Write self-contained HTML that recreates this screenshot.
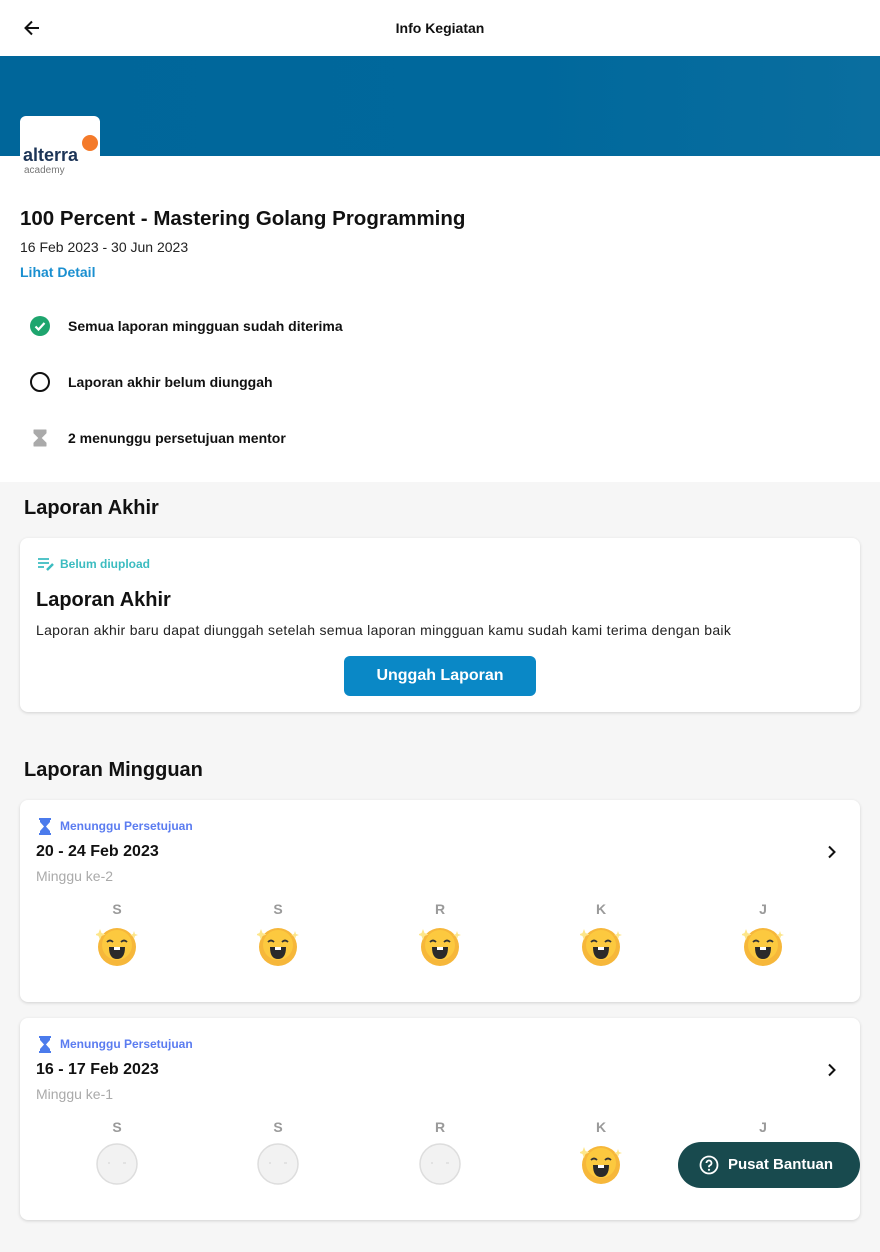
<!DOCTYPE html>
<html><head><meta charset="utf-8"><style>
*{box-sizing:border-box;margin:0;padding:0}
body{width:880px;height:1252px;background:#f6f6f6;font-family:"Liberation Sans",sans-serif;color:#111;position:relative;overflow:hidden}
.top{position:absolute;left:0;top:0;width:880px;height:482px;background:#fff}
.hdr{height:56px;position:relative}
.hdr .t{position:absolute;left:0;right:0;top:20px;text-align:center;font-size:14px;font-weight:bold}
.banner{position:absolute;top:56px;left:0;width:880px;height:100px;background:linear-gradient(90deg,#00669a,#00689c 60%,#0a6e9f)}
.logo{position:absolute;left:20px;top:116px;width:80px;height:80px;background:#fff;border-radius:6px}
.abs{position:absolute}
.card{position:absolute;left:20px;width:840px;background:#fff;border-radius:8px;box-shadow:0 1px 3px rgba(0,0,0,.15)}
.emo{position:absolute;width:42px;height:42px}
.dl{position:absolute;font-size:14px;font-weight:bold;color:#9a9a9a;width:20px;text-align:center}
</style></head><body>
<div class="top">
 <div class="hdr">
  <svg class="abs" style="left:22px;top:18px" width="20" height="20" viewBox="0 0 20 20"><path d="M17 10H4M10 3.5L3.5 10 10 16.5" stroke="#111" stroke-width="2" fill="none"/></svg>
  <div class="t">Info Kegiatan</div>
 </div>
 <div class="banner"></div>
 <div class="logo">
  <div class="abs" style="left:62px;top:19px;width:16px;height:16px;border-radius:50%;background:#f47a2a"></div>
  <div class="abs" style="left:3px;top:29px;font-size:18px;font-weight:bold;color:#1d3557;letter-spacing:0px">alterra</div>
  <div class="abs" style="left:4px;top:49px;font-size:10px;color:#777">academy</div>
 </div>
 <div class="abs" style="left:20px;top:207px;font-size:20.5px;font-weight:bold">100 Percent - Mastering Golang Programming</div>
 <div class="abs" style="left:20px;top:239px;font-size:14px;color:#222">16 Feb 2023 - 30 Jun 2023</div>
 <div class="abs" style="left:20px;top:264px;font-size:14px;font-weight:bold;color:#1a8fd0">Lihat Detail</div>
 <svg class="abs" style="left:29px;top:315px" width="22" height="22" viewBox="0 0 22 22"><circle cx="11" cy="11" r="10" fill="#1ea56e"/><path d="M6.5 11.5l3 3 6-6.5" stroke="#fff" stroke-width="2.2" fill="none"/></svg>
 <div class="abs" style="left:68px;top:318px;font-size:14px;font-weight:bold">Semua laporan mingguan sudah diterima</div>
 <svg class="abs" style="left:29px;top:371px" width="22" height="22" viewBox="0 0 22 22"><circle cx="11" cy="11" r="9" fill="none" stroke="#111" stroke-width="2"/></svg>
 <div class="abs" style="left:68px;top:374px;font-size:14px;font-weight:bold">Laporan akhir belum diunggah</div>
 <svg class="abs" style="left:33px;top:429px" width="14" height="18" viewBox="0 0 14 18"><path d="M1 1h12v3L8 9l5 5v3H1v-3l5-5L1 4z" fill="#aaa" stroke="#aaa" stroke-linejoin="round"/></svg>
 <div class="abs" style="left:68px;top:430px;font-size:14px;font-weight:bold">2 menunggu persetujuan mentor</div>
</div>

<div class="abs" style="left:24px;top:497px;font-size:20px;font-weight:bold">Laporan Akhir</div>
<div class="card" style="top:538px;height:174px">
 <svg class="abs" style="left:17px;top:19px" width="18" height="14" viewBox="0 0 18 14"><path d="M1 2h11M1 6h11M1 10h6" stroke="#3bbcc0" stroke-width="1.8"/><path d="M10 13l6-6" stroke="#3bbcc0" stroke-width="2.5"/></svg>
 <div class="abs" style="left:40px;top:19px;font-size:12px;font-weight:bold;color:#3bbcc0">Belum diupload</div>
 <div class="abs" style="left:16px;top:51px;font-size:20px;font-weight:bold">Laporan Akhir</div>
 <div class="abs" style="left:16px;top:84px;font-size:14px;color:#222;letter-spacing:0.3px">Laporan akhir baru dapat diunggah setelah semua laporan mingguan kamu sudah kami terima dengan baik</div>
 <div class="abs" style="left:324px;top:118px;width:192px;height:40px;border-radius:6px;background:#0a88c6;color:#fff;font-weight:bold;font-size:16px;text-align:center;line-height:40px">Unggah Laporan</div>
</div>

<div class="abs" style="left:24px;top:759px;font-size:20px;font-weight:bold">Laporan Mingguan</div>

<svg width="0" height="0" style="position:absolute"><defs>
<symbol id="hap" viewBox="0 0 42 42"><circle cx="21" cy="22" r="19" fill="#f6b73a"/><circle cx="21" cy="20" r="15" fill="#fcc93f"/><path d="M11 17q3-3 6 0M25 17q3-3 6 0" stroke="#333" stroke-width="1.8" fill="none"/><path d="M13 22h16q0 12-8 12t-8-12z" fill="#2a2a2a"/><rect x="18" y="22" width="6" height="3" fill="#fff"/><path d="M4 4l1.5 4 4 1.5-4 1.5L4 15l-1.5-4-4-1.5 4-1.5z" fill="#fde68a"/><path d="M38 6l1 3 3 1-3 1-1 3-1-3-3-1 3-1z" fill="#fde68a"/></symbol>
<symbol id="nil" viewBox="0 0 42 42"><circle cx="21" cy="21" r="20" fill="#f2f2f2" stroke="#ddd" stroke-width="1.5"/><path d="M13 19v2M27 20h3" stroke="#ddd" stroke-width="1.5"/></symbol>
</defs></svg>

<div class="card" style="top:800px;height:202px">
 <svg class="abs" style="left:19px;top:18px" width="12" height="17" viewBox="0 0 12 17"><path d="M0 0h12v2h-1v2L7 8.5 11 13v2h1v2H0v-2h1v-2l4-4.5L1 4V2H0z" fill="#4b7bec"/></svg>
 <div class="abs" style="left:40px;top:19px;font-size:12px;font-weight:bold;color:#5b7cf0">Menunggu Persetujuan</div>
 <div class="abs" style="left:16px;top:43px;font-size:16px;font-weight:bold">20 - 24 Feb 2023</div>
 <svg class="abs" style="left:806px;top:45px" width="12" height="14" viewBox="0 0 12 14"><path d="M3 1.5L8.5 7 3 12.5" stroke="#111" stroke-width="2" fill="none"/></svg>
 <div class="abs" style="left:16px;top:68px;font-size:14px;color:#aaa">Minggu ke-2</div>
 <div class="dl" style="left:87px;top:101px">S</div><div class="dl" style="left:248px;top:101px">S</div><div class="dl" style="left:410px;top:101px">R</div><div class="dl" style="left:571px;top:101px">K</div><div class="dl" style="left:733px;top:101px">J</div>
 <svg class="emo" style="left:76px;top:125px"><use href="#hap"/></svg>
 <svg class="emo" style="left:237px;top:125px"><use href="#hap"/></svg>
 <svg class="emo" style="left:399px;top:125px"><use href="#hap"/></svg>
 <svg class="emo" style="left:560px;top:125px"><use href="#hap"/></svg>
 <svg class="emo" style="left:722px;top:125px"><use href="#hap"/></svg>
</div>

<div class="card" style="top:1018px;height:202px">
 <svg class="abs" style="left:19px;top:18px" width="12" height="17" viewBox="0 0 12 17"><path d="M0 0h12v2h-1v2L7 8.5 11 13v2h1v2H0v-2h1v-2l4-4.5L1 4V2H0z" fill="#4b7bec"/></svg>
 <div class="abs" style="left:40px;top:19px;font-size:12px;font-weight:bold;color:#5b7cf0">Menunggu Persetujuan</div>
 <div class="abs" style="left:16px;top:43px;font-size:16px;font-weight:bold">16 - 17 Feb 2023</div>
 <svg class="abs" style="left:806px;top:45px" width="12" height="14" viewBox="0 0 12 14"><path d="M3 1.5L8.5 7 3 12.5" stroke="#111" stroke-width="2" fill="none"/></svg>
 <div class="abs" style="left:16px;top:68px;font-size:14px;color:#aaa">Minggu ke-1</div>
 <div class="dl" style="left:87px;top:101px">S</div><div class="dl" style="left:248px;top:101px">S</div><div class="dl" style="left:410px;top:101px">R</div><div class="dl" style="left:571px;top:101px">K</div><div class="dl" style="left:733px;top:101px">J</div>
 <svg class="emo" style="left:76px;top:125px"><use href="#nil"/></svg>
 <svg class="emo" style="left:237px;top:125px"><use href="#nil"/></svg>
 <svg class="emo" style="left:399px;top:125px"><use href="#nil"/></svg>
 <svg class="emo" style="left:560px;top:125px"><use href="#hap"/></svg>
</div>

<div class="abs" style="left:678px;top:1142px;width:182px;height:46px;border-radius:23px;background:#184a4e;color:#fff">
 <svg class="abs" style="left:21px;top:13px" width="20" height="20" viewBox="0 0 20 20"><circle cx="10" cy="10" r="8.5" fill="none" stroke="#fff" stroke-width="1.8"/><path d="M7.5 8a2.5 2.5 0 1 1 3.5 2.3c-.7.3-1 .8-1 1.5v.5" stroke="#fff" stroke-width="1.8" fill="none"/><circle cx="10" cy="14.8" r="1.1" fill="#fff"/></svg>
 <div class="abs" style="left:50px;top:14px;font-size:15px;font-weight:bold">Pusat Bantuan</div>
</div>
</body></html>
